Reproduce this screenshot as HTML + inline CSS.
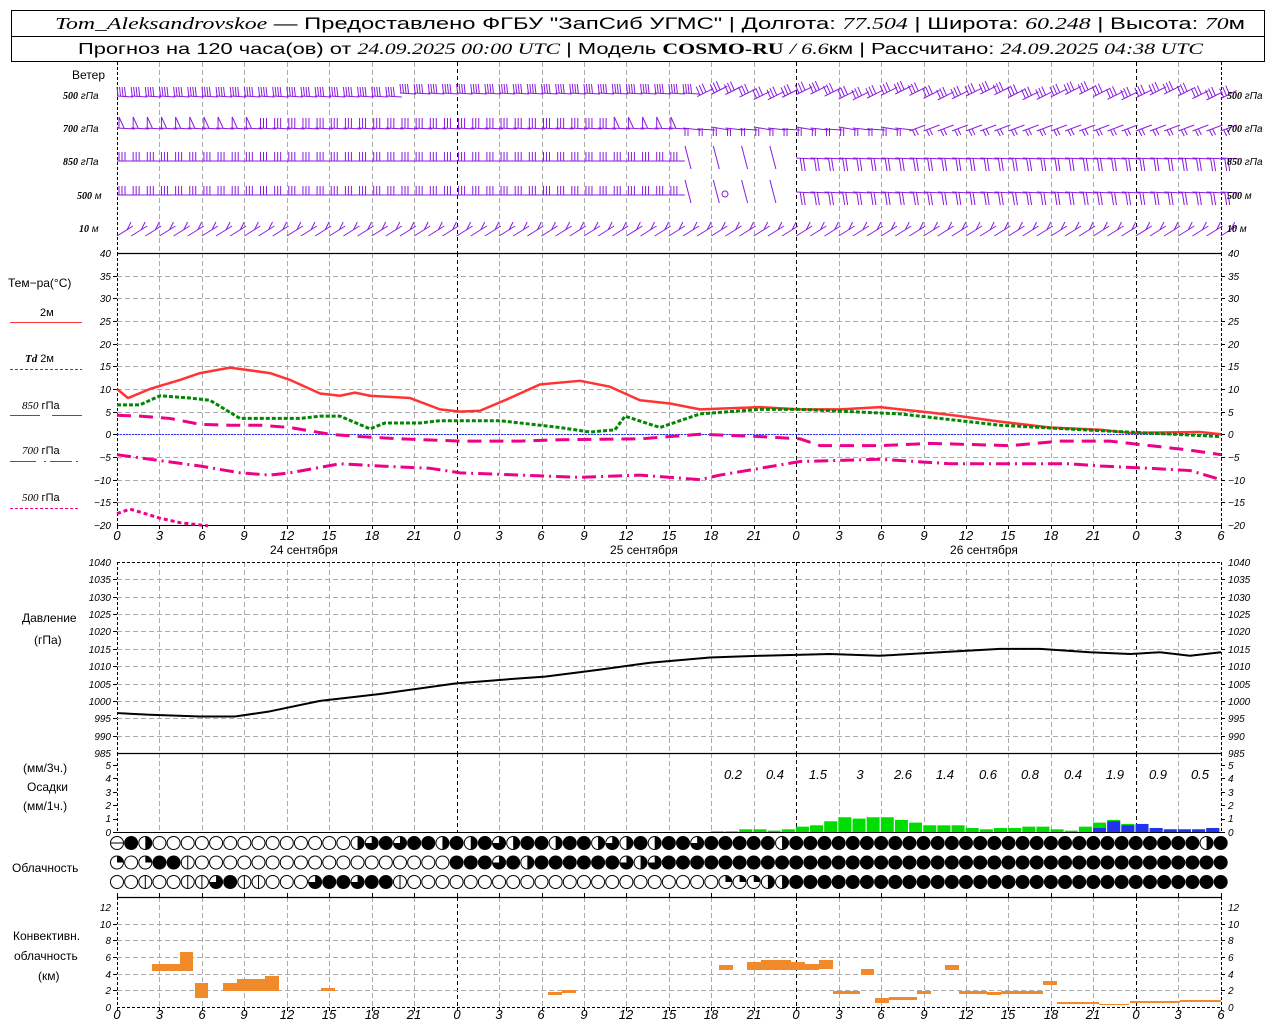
<!DOCTYPE html>
<html><head><meta charset="utf-8"><style>
html,body{margin:0;padding:0;background:#fff;width:1280px;height:1024px;overflow:hidden}
svg{display:block}
text{font-family:"Liberation Sans",sans-serif;fill:#000}
.t{font-size:11px;font-style:italic}
.l{font-size:12px}
.h{font-size:17px}
.it{font-family:"Liberation Serif",serif;font-style:italic}
</style></head><body>
<svg id="s" width="1280" height="1024" xmlns="http://www.w3.org/2000/svg">
<rect x="11.5" y="10.5" width="1253" height="51" fill="none" stroke="#000"/>
<line x1="11" y1="36.5" x2="1265" y2="36.5" stroke="#000"/>
<text x="55" y="29" class="h" textLength="1190" lengthAdjust="spacingAndGlyphs"><tspan class="it">Tom_Aleksandrovskoe</tspan> — Предоставлено ФГБУ "ЗапСиб УГМС" | Долгота: <tspan class="it">77.504</tspan> | Широта: <tspan class="it">60.248</tspan> | Высота: <tspan class="it">70</tspan>м</text>
<text x="78" y="54" class="h" style="font-size:16px" textLength="1125" lengthAdjust="spacingAndGlyphs">Прогноз на 120 часа(ов) от <tspan class="it">24.09.2025 00:00 UTC</tspan>  | Модель <tspan style="font-family:'Liberation Serif',serif;font-weight:bold">COSMO-RU</tspan> <tspan class="it">/ 6.6</tspan>км | Рассчитано: <tspan class="it">24.09.2025 04:38 UTC</tspan></text>
<g id="g"></g>
<text x="72" y="79" class="l">Ветер</text>
<g class="t" style="font-size:10px">
<text x="63" y="99"><tspan class="it" style="font-weight:bold">500</tspan> гПа</text>
<text x="63" y="132"><tspan class="it" style="font-weight:bold">700</tspan> гПа</text>
<text x="63" y="165"><tspan class="it" style="font-weight:bold">850</tspan> гПа</text>
<text x="77" y="199"><tspan class="it" style="font-weight:bold">500</tspan> м</text>
<text x="79" y="232"><tspan class="it" style="font-weight:bold">10</tspan>  м</text>
<text x="1227" y="99"><tspan class="it" style="font-weight:bold">500</tspan> гПа</text>
<text x="1227" y="132"><tspan class="it" style="font-weight:bold">700</tspan> гПа</text>
<text x="1227" y="165"><tspan class="it" style="font-weight:bold">850</tspan> гПа</text>
<text x="1227" y="199"><tspan class="it" style="font-weight:bold">500</tspan> м</text>
<text x="1227" y="232"><tspan class="it" style="font-weight:bold">10</tspan>  м</text>
</g>
<text x="8" y="287" class="l">Тем−ра(°C)</text>
<text x="40" y="316" class="l" style="font-size:11px">2м</text>
<text x="25" y="362" class="l" style="font-size:11px"><tspan class="it" style="font-weight:bold">Td</tspan>  2м</text>
<text x="22" y="409" class="l" style="font-size:11px"><tspan class="it">850</tspan> гПа</text>
<text x="22" y="454" class="l" style="font-size:11px"><tspan class="it">700</tspan> гПа</text>
<text x="22" y="501" class="l" style="font-size:11px"><tspan class="it">500</tspan> гПа</text>
<text x="22" y="622" class="l">Давление</text>
<text x="34" y="644" class="l">(гПа)</text>
<text x="23" y="772" class="l">(мм/3ч.)</text>
<text x="27" y="791" class="l">Осадки</text>
<text x="23" y="810" class="l">(мм/1ч.)</text>
<text x="12" y="872" class="l">Облачность</text>
<text x="13" y="940" class="l">Конвективн.</text>
<text x="14" y="960" class="l">облачность</text>
<text x="38" y="980" class="l">(км)</text>
<text x="304" y="554" class="l" text-anchor="middle">24 сентября</text>
<text x="644" y="554" class="l" text-anchor="middle">25 сентября</text>
<text x="984" y="554" class="l" text-anchor="middle">26 сентября</text>
<g class="t" text-anchor="middle" style="font-size:13px">
<text x="733" y="779">0.2</text><text x="775" y="779">0.4</text><text x="818" y="779">1.5</text><text x="860" y="779">3</text><text x="903" y="779">2.6</text><text x="945" y="779">1.4</text><text x="988" y="779">0.6</text><text x="1030" y="779">0.8</text><text x="1073" y="779">0.4</text><text x="1115" y="779">1.9</text><text x="1158" y="779">0.9</text><text x="1200" y="779">0.5</text>
</g>
<g class="t" text-anchor="middle" style="font-size:13px">
<text x="117" y="540">0</text><text x="159.5" y="540">3</text><text x="202" y="540">6</text><text x="244" y="540">9</text><text x="287" y="540">12</text><text x="329" y="540">15</text><text x="372" y="540">18</text><text x="414" y="540">21</text><text x="457" y="540">0</text><text x="499" y="540">3</text><text x="541" y="540">6</text><text x="584" y="540">9</text><text x="626" y="540">12</text><text x="669" y="540">15</text><text x="711" y="540">18</text><text x="754" y="540">21</text><text x="796" y="540">0</text><text x="839" y="540">3</text><text x="881" y="540">6</text><text x="924" y="540">9</text><text x="966" y="540">12</text><text x="1008" y="540">15</text><text x="1051" y="540">18</text><text x="1093" y="540">21</text><text x="1136" y="540">0</text><text x="1178" y="540">3</text><text x="1221" y="540">6</text>
</g>
<g class="t" text-anchor="middle" style="font-size:13px">
<text x="117" y="1019">0</text><text x="159.5" y="1019">3</text><text x="202" y="1019">6</text><text x="244" y="1019">9</text><text x="287" y="1019">12</text><text x="329" y="1019">15</text><text x="372" y="1019">18</text><text x="414" y="1019">21</text><text x="457" y="1019">0</text><text x="499" y="1019">3</text><text x="541" y="1019">6</text><text x="584" y="1019">9</text><text x="626" y="1019">12</text><text x="669" y="1019">15</text><text x="711" y="1019">18</text><text x="754" y="1019">21</text><text x="796" y="1019">0</text><text x="839" y="1019">3</text><text x="881" y="1019">6</text><text x="924" y="1019">9</text><text x="966" y="1019">12</text><text x="1008" y="1019">15</text><text x="1051" y="1019">18</text><text x="1093" y="1019">21</text><text x="1136" y="1019">0</text><text x="1178" y="1019">3</text><text x="1221" y="1019">6</text>
</g>
<g class="t" style="font-size:10px">
<g text-anchor="end">
<text x="111" y="257">40</text><text x="111" y="280">35</text><text x="111" y="302">30</text><text x="111" y="325">25</text><text x="111" y="348">20</text><text x="111" y="370">15</text><text x="111" y="393">10</text><text x="111" y="416">5</text><text x="111" y="438">0</text><text x="111" y="461">−5</text><text x="111" y="484">−10</text><text x="111" y="506">−15</text><text x="111" y="529">−20</text>
<text x="111" y="566">1040</text><text x="111" y="583">1035</text><text x="111" y="601">1030</text><text x="111" y="618">1025</text><text x="111" y="635">1020</text><text x="111" y="653">1015</text><text x="111" y="670">1010</text><text x="111" y="688">1005</text><text x="111" y="705">1000</text><text x="111" y="722">995</text><text x="111" y="740">990</text><text x="111" y="757">985</text>
<text x="111" y="836">0</text><text x="111" y="822">1</text><text x="111" y="809">2</text><text x="111" y="796">3</text><text x="111" y="782">4</text><text x="111" y="769">5</text>
<text x="111" y="1011">0</text><text x="111" y="994">2</text><text x="111" y="978">4</text><text x="111" y="961">6</text><text x="111" y="944">8</text><text x="111" y="928">10</text><text x="111" y="911">12</text>
</g>
<text x="1228" y="257">40</text><text x="1228" y="280">35</text><text x="1228" y="302">30</text><text x="1228" y="325">25</text><text x="1228" y="348">20</text><text x="1228" y="370">15</text><text x="1228" y="393">10</text><text x="1228" y="416">5</text><text x="1228" y="438">0</text><text x="1228" y="461">−5</text><text x="1228" y="484">−10</text><text x="1228" y="506">−15</text><text x="1228" y="529">−20</text>
<text x="1228" y="566">1040</text><text x="1228" y="583">1035</text><text x="1228" y="601">1030</text><text x="1228" y="618">1025</text><text x="1228" y="635">1020</text><text x="1228" y="653">1015</text><text x="1228" y="670">1010</text><text x="1228" y="688">1005</text><text x="1228" y="705">1000</text><text x="1228" y="722">995</text><text x="1228" y="740">990</text><text x="1228" y="757">985</text>
<text x="1228" y="836">0</text><text x="1228" y="822">1</text><text x="1228" y="809">2</text><text x="1228" y="796">3</text><text x="1228" y="782">4</text><text x="1228" y="769">5</text>
<text x="1228" y="1011">0</text><text x="1228" y="994">2</text><text x="1228" y="978">4</text><text x="1228" y="961">6</text><text x="1228" y="944">8</text><text x="1228" y="928">10</text><text x="1228" y="911">12</text>
</g>
</svg>
<script>
var g=document.getElementById('g'),NS='http://www.w3.org/2000/svg';
function el(t,a){var e=document.createElementNS(NS,t);for(var k in a)e.setAttribute(k,a[k]);g.appendChild(e);return e;}
function L(x1,y1,x2,y2,c,w,d){var a={x1:x1,y1:y1,x2:x2,y2:y2,stroke:c,'stroke-width':w||1};if(d)a['stroke-dasharray']=d;el('line',a);}
var X0=117,X1=1221,DX=42.45,PH=14.15;
L(10,322.5,82,322.5,'#f33',1);L(10,369.5,82,369.5,'#080',1,'3,2');
L(10,415.5,40,415.5,'#e08',1);L(52,415.5,82,415.5,'#e08',1);
L(10,461.5,36,461.5,'#e08',1);L(44,461.5,46,461.5,'#e08',1);L(50,461.5,72,461.5,'#e08',1);L(76,461.5,78,461.5,'#e08',1);
L(10,508.5,78,508.5,'#e08',1,'3,2');
function vgrid(y1,y2){for(var i=1;i<26;i++){var x=Math.round(X0+i*DX)+.5;if(i%8==0)L(x,y1,x,y2,'#000',1,'4,3');else L(x,y1,x,y2,'#aaa',1,'5,3');}
L(X0+.5,y1,X0+.5,y2,'#000',1,'3,2');L(X1+.5,y1,X1+.5,y2,'#000',1,'3,2');}
function hgrid(ys){ys.forEach(function(y){y=Math.round(y)+.5;L(X0,y,X1,y,'#aaa',1,'5,3');L(X0-4,y,X0,y,'#000',1);L(X1,y,X1+4,y,'#000',1);});}
vgrid(62,253);vgrid(253,525);vgrid(562,753);vgrid(753,832);vgrid(897,1007);
var ys=[];for(var k=1;k<12;k++)ys.push(253+k*272/12);hgrid(ys);
ys=[];for(var k=1;k<11;k++)ys.push(562+k*191/11);hgrid(ys);
ys=[];for(var k=1;k<6;k++)ys.push(1007-k*16.67);hgrid(ys);
for(var k=0;k<=5;k++){var y=Math.round(832-k*13.4)+.5;L(X0-4,y,X0,y,'#000');L(X1,y,X1+4,y,'#000');}
L(X0,253.5,X1,253.5,'#000',1.2);L(X0,525.5,X1,525.5,'#000',1);
L(X0,562.5,X1,562.5,'#000',1,'3,2');L(X0,753.5,X1,753.5,'#000',1.2);L(X0,832.5,X1,832.5,'#000',1);
L(X0,897.5,X1,897.5,'#000',1.2);L(X0,1007.5,X1,1007.5,'#000',1,'3,2');
for(var i=0;i<27;i++){var x=Math.round(X0+i*DX)+.5;L(x,525,x,529,'#000');L(x,1007,x,1011,'#000');L(x,897,x,893,'#000');}
var P='#8a1ae0';
var rows=[95,128,161,195,228];
for(var h=0;h<79;h++){var x=X0+h*PH;
 for(var r=0;r<5;r++){var y=rows[r];var n;
  if(r==0){n=4;var yy=y-2+(h<20?3:0)+(h>40?Math.sin(h)*3:0);
   if(h>40){L(x,yy+4,x+16,yy-4,P);for(var f=0;f<3;f++)L(x+3+f*3,yy+3-f*1.5,x-1+f*3,yy-6-f*1.5,P);}
   else{L(x,yy,x+16,yy+1,P);for(var f=0;f<n;f++)L(x+1+f*2.5,yy,x+f*2.5,yy-9,P);}}
  else if(r==1){var yy=y;if(h<40){n=h<10?1:3;L(x,yy,x+18,yy+1,P);if(h<10||h>34){L(x+2,yy,x+2,yy-11,P);L(x+2,yy-11,x+7,yy,P);}else for(var f=0;f<n;f++)L(x+2+f*3,yy,x+2+f*3,yy-10,P);}
   else if(h<56){L(x,yy+h%3-1,x+18,yy+2,P);for(var f=0;f<2;f++)L(x+2+f*3,yy,x+2+f*3,yy+8,P);}
   else{L(x,yy+3,x+16,yy-3,P);L(x+3,yy+2,x+6,yy+8,P);L(x+6,yy+1,x+9,yy+7,P);}}
  else if(r==2||r==3){var yy=y;if(h<40){n=3;L(x,yy,x+16,yy,P);for(var f=0;f<n;f++)L(x+2+f*3,yy,x+2+f*3,yy-9,P);}
   else if(h<48){if(h%2==0)L(x+2,yy-15,x+8,yy+8,P);}
   else{L(x,yy-3,x+18,yy-2,P);L(x+4,yy-3,x+6,yy+10,P);L(x+7,yy-3,x+9,yy+10,P);}}
  else{var yy=y;L(x,yy+8,x+16,yy-2,P);L(x+10,yy+2,x+14,yy-6,P);}
 }}
el('circle',{cx:725,cy:194,r:3,fill:'none',stroke:P});
function ty(t){return 434.3-4.533*t;}
function curve(pts,c,w,d,f){var s='';for(var i=0;i<pts.length;i+=2)s+=(i?'L':'M')+pts[i]+','+f(pts[i+1]);var a={d:s,fill:'none',stroke:c,'stroke-width':w,'stroke-linejoin':'round'};if(d)a['stroke-dasharray']=d;el('path',a);}
L(X0,434.5,X1,434.5,'#33f',1,'2,1');
curve([117,10,128,8,150,10,180,12,200,13.5,230,14.7,270,13.5,290,12,320,9,340,8.5,355,9.2,370,8.5,410,8,440,5.5,460,5,480,5.2,510,8,540,11,580,11.8,610,10.5,640,7.5,670,6.8,700,5.5,760,6,800,5.5,840,5.5,880,6,930,4.8,960,4,1000,2.8,1050,1.5,1100,1,1130,0.3,1200,0.5,1221,0],'#f33',2.5,null,ty);
curve([117,6.5,140,6.5,160,8.5,190,8,210,7.5,240,3.5,280,3.5,300,3.5,320,4,340,4,370,1.2,385,2.5,420,2.5,440,3,500,3,560,1.5,590,0.5,615,1,625,4,660,1.5,700,4.5,760,5.5,800,5.5,850,5,900,4.5,960,3,1000,2,1100,0.8,1221,-0.5],'#080',3,'4,2',ty);
curve([117,4.2,140,4,170,3.5,200,2.2,230,2,260,2,290,1.5,330,0,360,-0.5,400,-1,460,-1.5,520,-1.5,560,-1.2,640,-1,700,0,760,-0.5,800,-1,820,-2.5,880,-2.5,930,-2,1010,-2.5,1060,-1.5,1110,-1.5,1150,-2.5,1190,-3.5,1221,-4.5],'#e08',3,'14,8',ty);
curve([117,-4.5,150,-5.5,200,-7,240,-8.5,270,-9,290,-8.5,340,-6.5,380,-7,430,-7.5,460,-8.5,520,-9,580,-9.5,640,-9,700,-10,720,-9,800,-6,880,-5.5,950,-6.5,1020,-6.5,1070,-6.5,1100,-7,1150,-7.5,1190,-8,1221,-10],'#e08',3,'14,5,2,5',ty);
curve([117,-17.5,130,-16.5,160,-18.5,180,-19.5,208,-20.2],'#e08',3,'4,3',ty);
function py(p){return 562+(1040-p)*191/55;}
curve([117,996.5,150,996,200,995.5,235,995.5,270,997,320,1000,380,1002,455,1005,520,1006.5,545,1007,600,1009,650,1011,710,1012.5,760,1013,830,1013.5,880,1013,940,1014,1000,1015,1040,1015,1090,1014,1130,1013.5,1160,1014,1190,1013,1221,1014],'#000',2,null,py);
var pr=[[.05],[.05],[.2],[.2],[.1],[.2],[.4],[.5],[.8],[1.1],[1],[1.1],[1.1],[.9],[.7],[.5],[.5],[.5],[.3],[.2],[.3],[.3],[.4],[.4],[.2],[.1],[.4],[.7,.3],[.9,.8],[.6,.5],[.6,.6],[.3,.3],[.2,.2],[.2,.2],[.2,.2],[.3,.3]];
for(var i=0;i<pr.length;i++){var x=711+i*PH;var g1=pr[i][0]*13.4;el('rect',{x:x,y:832-g1,width:13,height:g1,fill:'#0d0'});if(pr[i].length>1){var b=pr[i][1]*13.4;el('rect',{x:x,y:832-b,width:13,height:b,fill:'#23e'});}}
function cloud(cx,cy,t){var r=6.5;el('circle',{cx:cx,cy:cy,r:r,fill:t=='F'?'#000':'#fff',stroke:'#000','stroke-width':1});
 if(t=='H'){el('path',{d:'M'+cx+','+(cy-r)+'A'+r+','+r+' 0 0 1 '+cx+','+(cy+r)+'Z',fill:'#000'});}
 if(t=='T'){el('path',{d:'M'+cx+','+cy+'L'+cx+','+(cy-r)+'A'+r+','+r+' 0 1 1 '+(cx-r)+','+cy+'Z',fill:'#000'});}
 if(t=='Q'){el('path',{d:'M'+cx+','+cy+'L'+cx+','+(cy-r)+'A'+r+','+r+' 0 0 1 '+(cx+r)+','+cy+'Z',fill:'#000'});}
 if(t=='V'){L(cx,cy-r,cx,cy+r,'#000');}
 if(t=='M'){L(cx-r,cy,cx+r,cy,'#000');}
}
var r1='MFH'+'EEEEEEEEEEEEEE'+'HTFTFFHFHFTHFFHFFHTHFHFFTFFF'+'FFHFFFF'+'FFFFFFFFFFFFFFFFFFFFFFFFFH';
var r2='QEQFFV'+'EEEEEEEEEEEEEEEEEE'+'FFFTFHFFFFFFTHTFFFFF'+'FFFFFFFFFFFFFFFFFFFFFFFFFFFFFFFFFFFFF';
var r3='EEVEEVVTFVVEEETFFTFFV'+'EEEEEEEEEEEEEEEEEEEEEE'+'QQQHH'+'FFFFFFFFFFFFFFFFFFFFFFFFFFFFFFFFFFFFFFFFF';
[r1,r2,r3].forEach(function(s,ri){for(var h=0;h<79;h++){var t=s[h]||'F';cloud(X0+h*PH,843+ri*19.5,t);}});
var cv=[[152,964,41,7],[180,952,13,19],[195,983,13,15],[223,983,14,8],[237,979,28,12],[265,976,14,15],[321,988,14,3],[548,992,14,3],[562,990,14,3],[719,965,14,5],[747,962,14,8],[761,960,30,10],[791,962,14,8],[805,964,14,6],[819,960,14,9],[833,991,27,3],[861,969,13,6],[875,998,14,5],[889,997,28,3],[917,991,14,3],[945,965,14,5],[959,991,28,3],[987,992,14,3],[1001,991,42,3],[1043,981,14,4],[1057,1002,42,2],[1099,1004,30,1],[1130,1001,50,2],[1180,1000,41,2]];
cv.forEach(function(a){el('rect',{x:a[0],y:a[1],width:a[2],height:a[3],fill:'#f08a2a'});});
</script>
</body></html>
